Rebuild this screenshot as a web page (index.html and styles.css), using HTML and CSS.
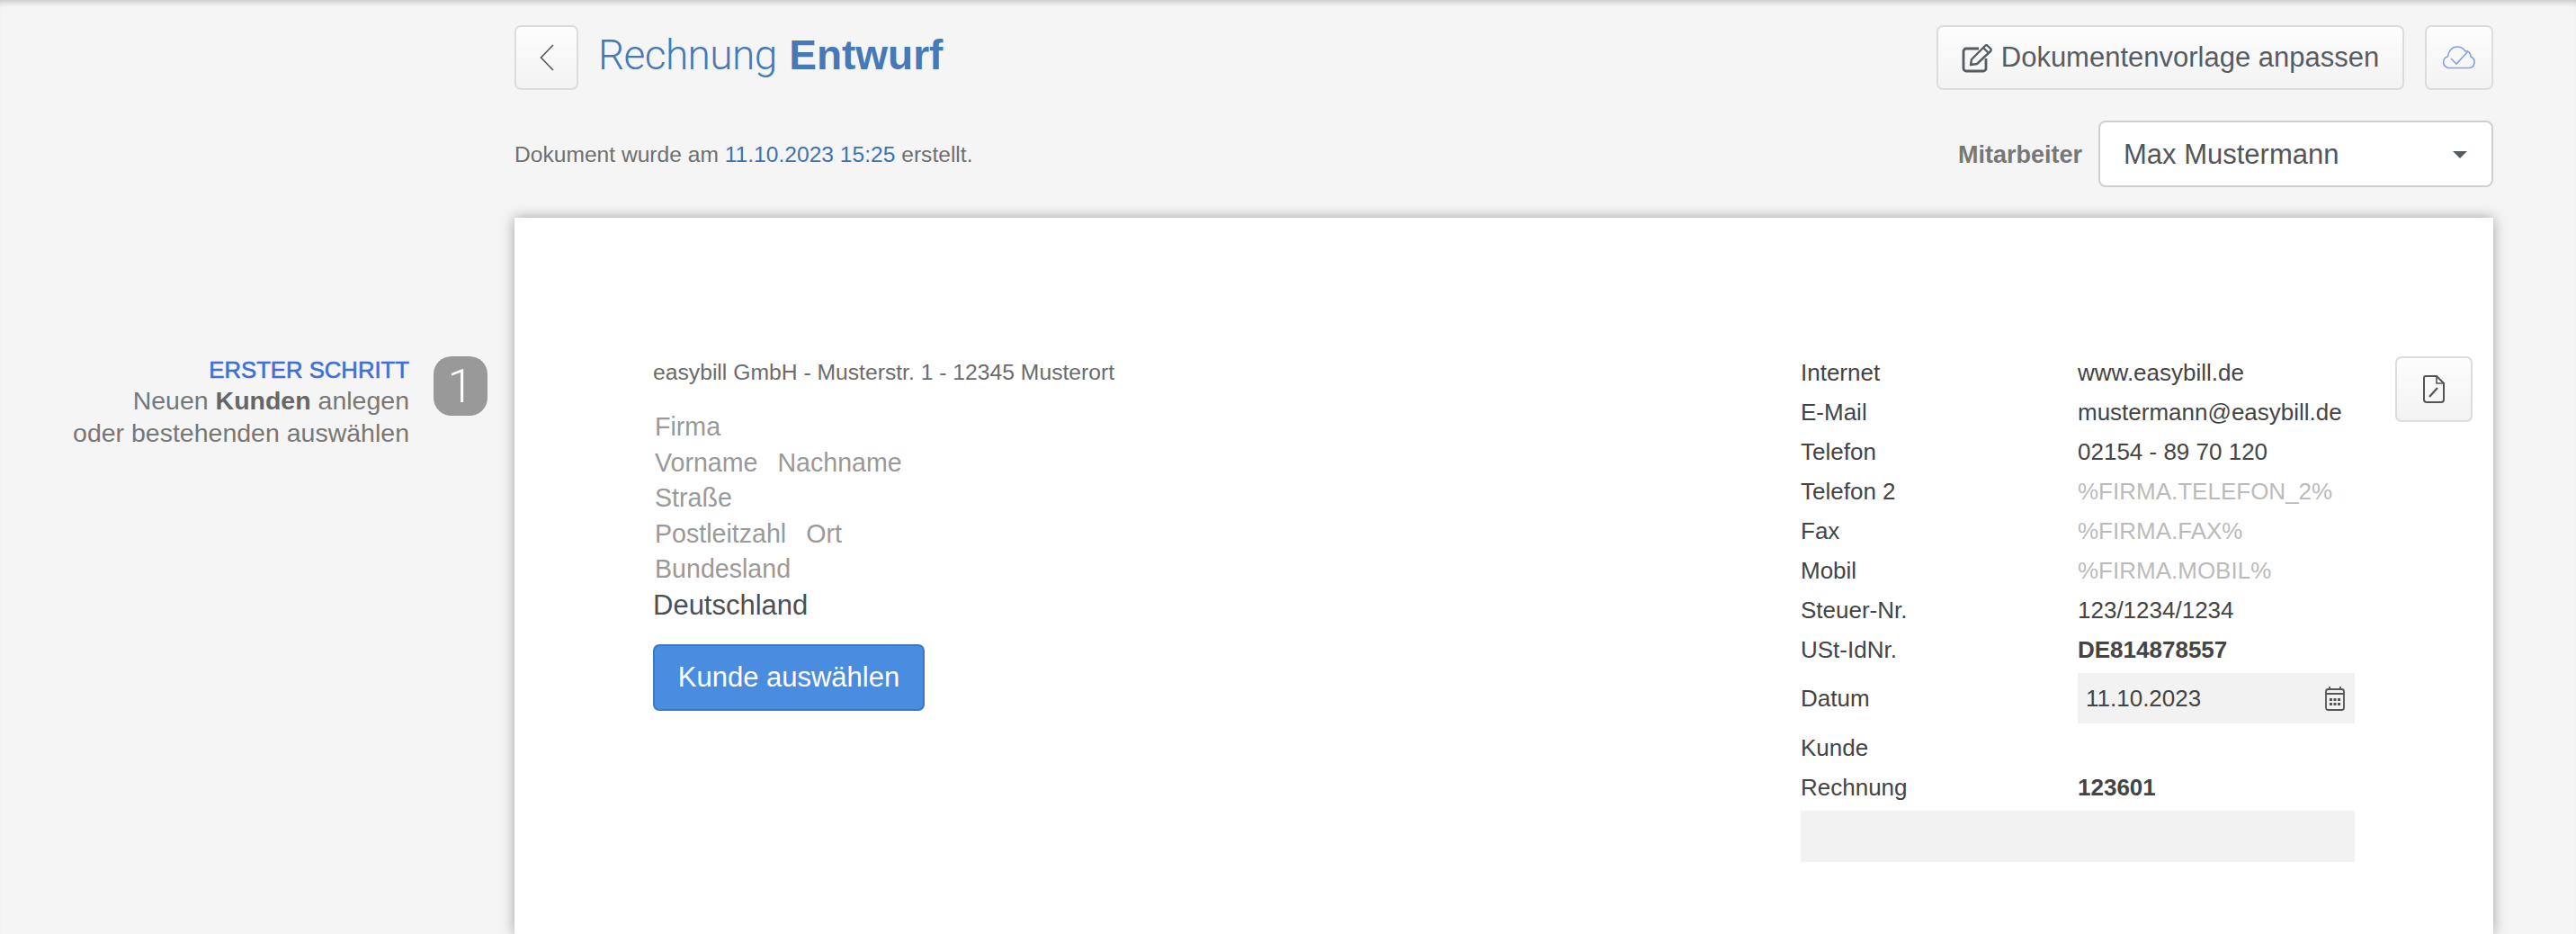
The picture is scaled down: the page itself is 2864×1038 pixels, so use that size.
FILE: index.html
```html
<!DOCTYPE html>
<html lang="de">
<head>
    <meta charset="UTF-8">
    <title>Rechnung Entwurf - easybill</title>
    <link rel="stylesheet" href="styles.css">
</head>
<body>
<div class="page">
    <aside class="side">
        <div class="step-text">
            <div class="step-title">ERSTER SCHRITT</div>
            <div>Neuen <b>Kunden</b> anlegen</div>
            <div>oder bestehenden auswählen</div>
        </div>
        <div class="step-badge">1</div>
    </aside>

    <main class="main">
        <div class="top-row">
            <div class="title-wrap">
                <button class="btn btn-back">
                    <svg width="16" height="30" viewBox="0 0 16 30"><path d="M15 1 1.500 15 15 29" fill="none" stroke="#555" stroke-width="1.600"/></svg>
                </button>
                <h1 class="title">Rechnung <b>Entwurf</b></h1>
            </div>
            <div class="actions">
                <button class="btn btn-template">
                    <svg width="36" height="34" viewBox="0 0 36 34"><path d="M19 7H5a3 3 0 0 0-3 3v19a3 3 0 0 0 3 3h19a3 3 0 0 0 3-3V18" fill="none" stroke="#555c63" stroke-width="2.800"/><path d="M10 25l1-6L26 4a2 2 0 0 1 3 0l3 3a2 2 0 0 1 0 3L17 24zM24 6l6 6" fill="none" stroke="#555c63" stroke-width="2.400" stroke-linejoin="round"/></svg>
                    Dokumentenvorlage anpassen
                </button>
                <button class="btn btn-cloud">
                    <svg width="39" height="26" viewBox="0 0 39 26"><path d="M8.500 24.500a6.500 6.500 0 0 1-2-12.800C7 6 11 1 17 1c4 0 7 2 9 5 3-1 6 2 6 6a6.500 6.500 0 0 1-2 12.500z" fill="none" stroke="#7fa3e2" stroke-width="1.600"/><path d="M10 14l6 6L29 6" fill="none" stroke="#7fa3e2" stroke-width="1.600"/></svg>
                </button>
            </div>
        </div>

        <div class="meta-row">
            <div class="created">Dokument wurde am <span class="created-date">11.10.2023 15:25</span> erstellt.</div>
            <div class="employee">
                <label class="employee-label">Mitarbeiter</label>
                <div class="select">Max Mustermann<span class="caret"></span></div>
            </div>
        </div>

        <section class="sheet">
            <div class="address">
                <div class="sender">easybill GmbH - Musterstr. 1 - 12345 Musterort</div>
                <div class="address-line">Firma</div>
                <div class="address-line"><span>Vorname</span><span>Nachname</span></div>
                <div class="address-line">Straße</div>
                <div class="address-line"><span>Postleitzahl</span><span>Ort</span></div>
                <div class="address-line">Bundesland</div>
                <div class="address-line country">Deutschland</div>
                <button class="btn-customer">Kunde auswählen</button>
            </div>

            <div class="info">
                <div class="info-row"><span>Internet</span><span>www.easybill.de</span></div>
                <div class="info-row"><span>E-Mail</span><span>mustermann@easybill.de</span></div>
                <div class="info-row"><span>Telefon</span><span>02154 - 89 70 120</span></div>
                <div class="info-row"><span>Telefon 2</span><span class="empty">%FIRMA.TELEFON_2%</span></div>
                <div class="info-row"><span>Fax</span><span class="empty">%FIRMA.FAX%</span></div>
                <div class="info-row"><span>Mobil</span><span class="empty">%FIRMA.MOBIL%</span></div>
                <div class="info-row"><span>Steuer-Nr.</span><span>123/1234/1234</span></div>
                <div class="info-row"><span>USt-IdNr.</span><b>DE814878557</b></div>
                <div class="info-row date-row">
                    <span>Datum</span>
                    <div class="date-field">11.10.2023
                        <svg width="22" height="28" viewBox="0 0 22 28"><rect x="1" y="4" width="20" height="23" rx="2.500" fill="none" stroke="#555" stroke-width="1.800"/><path d="M1 9h20M5 1v3M17 1v3" stroke="#555" stroke-width="1.800"/><path d="M5 14h3v3H5zM9.500 14h3v3h-3zM14 14h3v3h-3zM5 19h3v3H5zM9.500 19h3v3h-3zM14 19h3v3h-3z" fill="#555"/></svg>
                    </div>
                </div>
                <div class="info-row"><span>Kunde</span><span></span></div>
                <div class="info-row"><span>Rechnung</span><b>123601</b></div>
                <div class="info-block"></div>
            </div>

            <button class="btn btn-doc">
                <svg width="24" height="31" viewBox="0 0 24 31"><path d="M3 1h12l8 8v18a3 3 0 0 1-3 3H4a3 3 0 0 1-3-3V3a2 2 0 0 1 2-2z" fill="none" stroke="#555" stroke-width="2"/><path d="M15 1v8h8" fill="none" stroke="#555" stroke-width="1.600"/><path d="M7 24l9-10" stroke="#555" stroke-width="2.200"/></svg>
            </button>
        </section>
    </main>
</div>
</body>
</html>
```

FILE: styles.css
```css
* {
    box-sizing: border-box;
}

html, body {
    margin: 0;
    height: 1038px;
    overflow: hidden;
}

body {
    font-family: "Liberation Sans", Arial, sans-serif;
    background-color: #f5f5f5;
    color: #444;
    box-shadow: inset 0 7px 7px -5px rgba(0, 0, 0, 0.22);
}

.page {
    display: flex;
    height: 1038px;
}

/* lado izquierdo */
.side {
    width: 572px;
    flex: none;
    display: flex;
    justify-content: flex-end;
    align-items: flex-start;
    gap: 27px;
    padding: 396px 30px 0 0;
}

.step-text {
    text-align: right;
    font-size: 28.500px;
    line-height: 36px;
    color: #777;
    margin-top: -1px;
}

.step-title {
    color: #3f6fd6;
    font-size: 25.700px;
    line-height: 32px;
    -webkit-text-stroke: 0.6px #3f6fd6;
}

.step-text b {
    color: #666;
}

.step-badge {
    width: 60px;
    height: 66px;
    border-radius: 20px;
    background-color: #999;
    color: #fff;
    font-family: Roboto, sans-serif;
    font-weight: 300;
    font-size: 52px;
    display: flex;
    align-items: center;
    justify-content: center;
}

.main {
    flex: 1;
    padding: 28px 92px 0 0;
    min-width: 0;
}

.top-row, .meta-row {
    display: flex;
    justify-content: space-between;
}

.title-wrap, .actions, .employee {
    display: flex;
    align-items: center;
}

.btn {
    height: 72px;
    background: linear-gradient(#fdfdfd, #f3f3f3);
    border: 2px solid #dcdcdc;
    border-radius: 7px;
    color: #555c63;
    display: flex;
    align-items: center;
    justify-content: center;
    padding: 0;
    font-family: inherit;
}

.btn-back {
    width: 71px;
}

.title {
    margin: 0 0 0 22px;
    font-family: Roboto, sans-serif;
    font-weight: 300;
    font-size: 46px;
    letter-spacing: -0.600px;
    color: #4679b5;
    position: relative;
    top: -3px;
}

.title b {
    font-family: "Liberation Sans", sans-serif;
    font-weight: 700;
    letter-spacing: 0;
    margin-left: 3px;
}

.actions {
    gap: 23px;
}

.btn-template {
    width: 520px;
    font-size: 31px;
    gap: 8px;
}

.btn-cloud {
    width: 76px;
}

.meta-row {
    margin-top: 34px;
    align-items: center;
}

.created {
    font-size: 24.600px;
    color: #6f6f6f;
    padding-top: 2px;
}

.created-date {
    color: #3f72b0;
}

.employee {
    gap: 18px;
}

.employee-label {
    font-size: 27px;
    font-weight: 700;
    color: #777;
    padding-top: 2px;
}

.select {
    width: 439px;
    height: 74px;
    background-color: #fff;
    border: 2px solid #cfcfcf;
    border-radius: 8px;
    font-size: 31px;
    color: #50565c;
    padding: 2px 27px 0 26px;
    display: flex;
    align-items: center;
    justify-content: space-between;
}

.caret {
    width: 0;
    height: 0;
    border-left: 8px solid transparent;
    border-right: 8px solid transparent;
    border-top: 8px solid #555c63;
}

/* la hoja blanca */
.sheet {
    margin-top: 34px;
    height: 796px;
    background-color: #fff;
    box-shadow: 0 0 14px rgba(0, 0, 0, 0.35);
    display: flex;
    align-items: flex-start;
    padding: 150px 23px 0 154px;
}

.address {
    flex: 1;
}

.sender {
    font-size: 24.700px;
    line-height: 44px;
    color: #6b6b6b;
    margin-bottom: 19px;
}

.address-line {
    font-size: 28.600px;
    line-height: 39.500px;
    color: #999;
    padding-left: 2px;
    display: flex;
    gap: 22px;
}

.country {
    font-size: 31px;
    color: #495057;
    padding-left: 0;
}

.btn-customer {
    margin-top: 24px;
    width: 302px;
    height: 74px;
    background-color: #4a8de0;
    border: 2px solid #3b78c6;
    border-radius: 7px;
    color: #fff;
    font-family: inherit;
    font-size: 31px;
    padding: 0;
}

.info {
    width: 616px;
    flex: none;
    font-size: 26px;
    line-height: 44px;
}

.info-row {
    display: grid;
    grid-template-columns: 308px 1fr;
    align-items: center;
}

.info .empty {
    color: #bbb;
}

.date-row {
    margin-top: 4px;
    margin-bottom: 5px;
}

.date-field {
    height: 56px;
    background-color: #f2f2f2;
    padding: 0 11px 0 9px;
    display: flex;
    align-items: center;
    justify-content: space-between;
}

.info-block {
    margin-top: 4px;
    height: 57px;
    background-color: #f2f2f2;
}

.btn-doc {
    width: 86px;
    height: 73px;
    flex: none;
    margin: 4px 0 0 45px;
}
```
